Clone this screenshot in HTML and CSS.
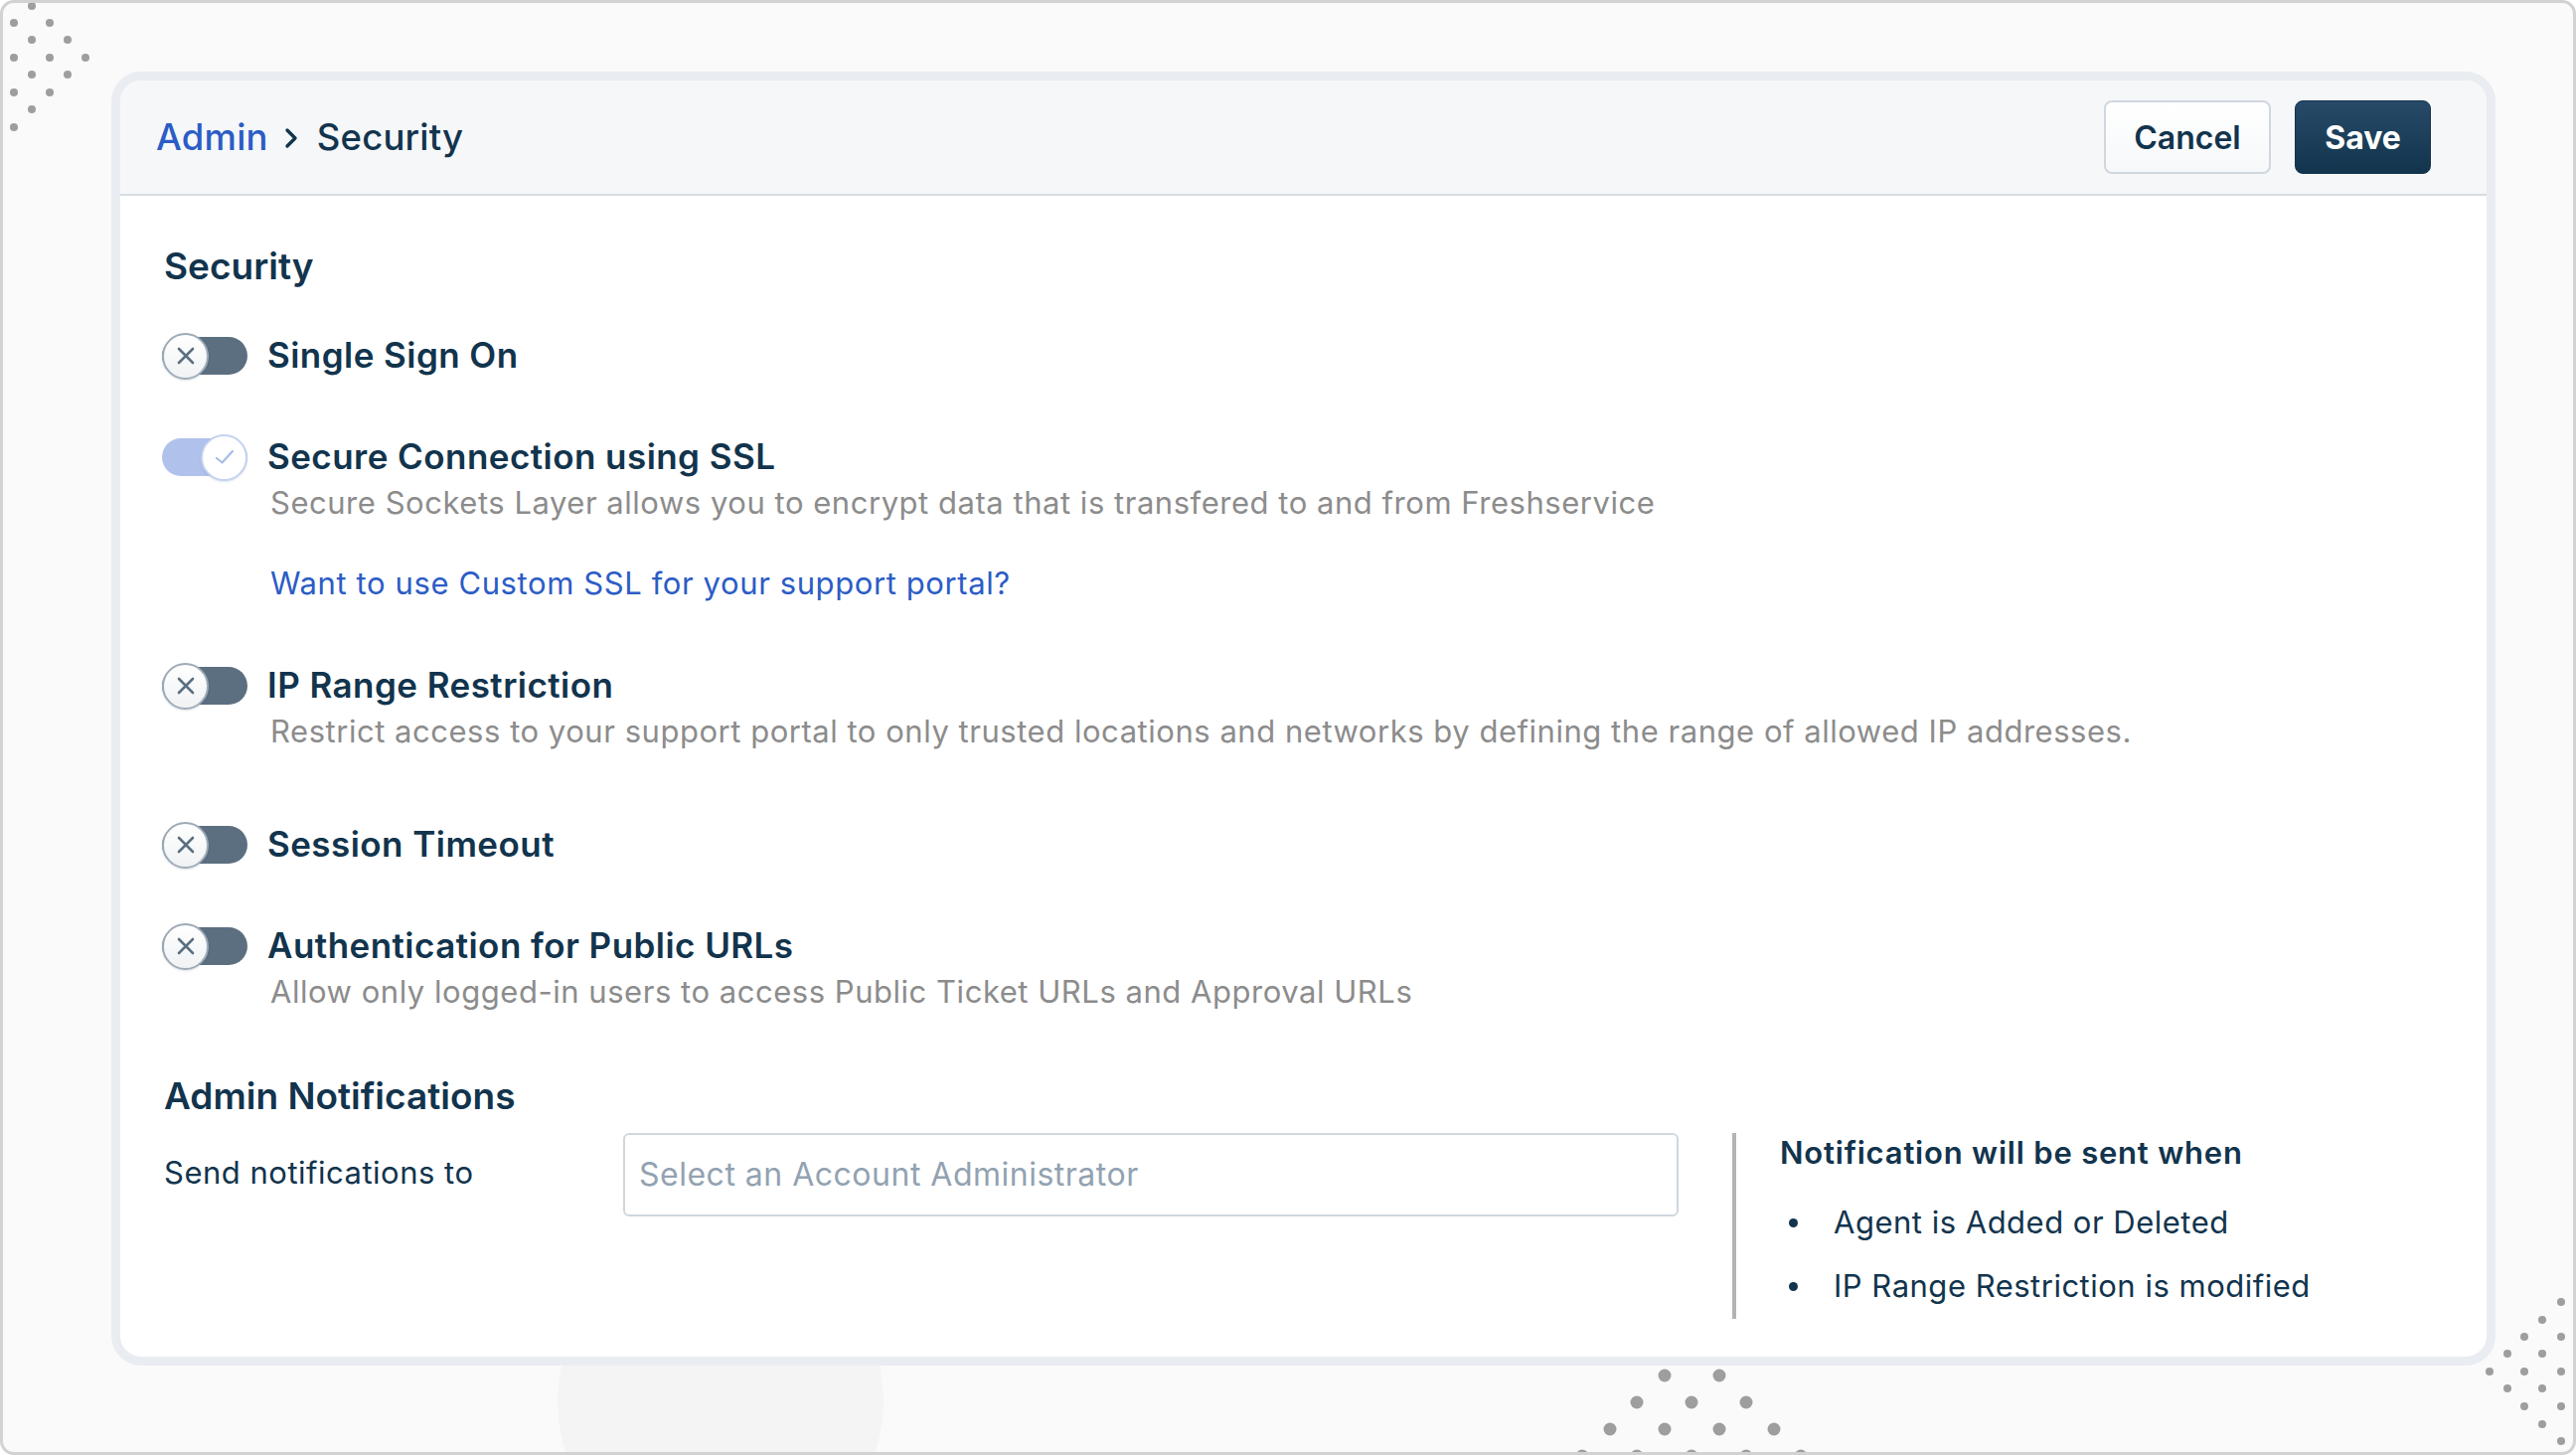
FILE: index.html
```html
<!DOCTYPE html>
<html lang="en">
<head>
<meta charset="utf-8">
<title>Admin - Security</title>
<link rel="stylesheet" href="styles.css">
</head>
<body>
<div class="frame">
  <div class="blob"></div>
  <svg class="dots" width="2592" height="1464" viewBox="0 0 2592 1464" aria-hidden="true">
    <g fill="#9e9e9e">
      <circle cx="32" cy="6" r="4"/>
      <circle cx="14" cy="23" r="4"/><circle cx="50" cy="23" r="4"/>
      <circle cx="32" cy="40" r="4"/><circle cx="68" cy="40" r="4"/>
      <circle cx="14" cy="58" r="4"/><circle cx="50" cy="58" r="4"/><circle cx="86" cy="58" r="4"/>
      <circle cx="32" cy="75" r="4"/><circle cx="68" cy="75" r="4"/>
      <circle cx="14" cy="93" r="4"/><circle cx="50" cy="93" r="4"/>
      <circle cx="32" cy="110" r="4"/>
      <circle cx="14" cy="128" r="4"/>

      <circle cx="2577" cy="1310" r="4"/>
      <circle cx="2558" cy="1328" r="4"/>
      <circle cx="2540" cy="1345" r="4"/><circle cx="2577" cy="1345" r="4"/>
      <circle cx="2523" cy="1362" r="4"/><circle cx="2558" cy="1362" r="4"/>
      <circle cx="2505" cy="1380" r="4"/><circle cx="2540" cy="1380" r="4"/><circle cx="2577" cy="1380" r="4"/>
      <circle cx="2523" cy="1397" r="4"/><circle cx="2558" cy="1397" r="4"/>
      <circle cx="2540" cy="1415" r="4"/><circle cx="2577" cy="1415" r="4"/>
      <circle cx="2558" cy="1433" r="4"/>
      <circle cx="2577" cy="1450" r="4"/>

      <circle cx="1675" cy="1384" r="6.5"/><circle cx="1730" cy="1384" r="6.5"/>
      <circle cx="1647" cy="1411" r="6.5"/><circle cx="1702" cy="1411" r="6.5"/><circle cx="1757" cy="1411" r="6.5"/>
      <circle cx="1620" cy="1438" r="6.5"/><circle cx="1675" cy="1438" r="6.5"/><circle cx="1730" cy="1438" r="6.5"/><circle cx="1785" cy="1438" r="6.5"/>
      <circle cx="1592" cy="1465" r="6.5"/><circle cx="1647" cy="1465" r="6.5"/><circle cx="1702" cy="1465" r="6.5"/><circle cx="1757" cy="1465" r="6.5"/><circle cx="1812" cy="1465" r="6.5"/>
    </g>
  </svg>

  <main class="card">
    <header class="card-head">
      <nav class="crumbs">
        <a class="crumb-link" href="#">Admin</a>
        <svg class="crumb-sep" width="14" height="22" viewBox="0 0 14 22" aria-hidden="true"><path d="M3 3 L11 11 L3 19" fill="none" stroke="#12344d" stroke-width="3.4" stroke-linecap="round" stroke-linejoin="round"/></svg>
        <span class="crumb-current">Security</span>
      </nav>
      <div class="actions">
        <button class="btn btn-secondary">Cancel</button>
        <button class="btn btn-primary">Save</button>
      </div>
    </header>

    <section class="card-body">
      <h2 class="section-title">Security</h2>

      <div class="settings">
        <div class="setting">
          <span class="toggle"><span class="knob"><svg width="22" height="22" viewBox="0 0 22 22"><path d="M4 4 L18 18 M18 4 L4 18" stroke="#5b6f80" stroke-width="2.6" stroke-linecap="round"/></svg></span></span>
          <div class="setting-text">
            <div class="setting-title">Single Sign On</div>
          </div>
        </div>

        <div class="setting">
          <span class="toggle toggle-on"><span class="knob"><svg width="22" height="22" viewBox="0 0 22 22"><path d="M3 12 L8.5 16.5 L19 5" fill="none" stroke="#a9bce6" stroke-width="2.2" stroke-linecap="round" stroke-linejoin="round"/></svg></span></span>
          <div class="setting-text">
            <div class="setting-title">Secure Connection using SSL</div>
            <div class="setting-desc">Secure Sockets Layer allows you to encrypt data that is transfered to and from Freshservice</div>
            <a class="setting-link" href="#">Want to use Custom SSL for your support portal?</a>
          </div>
        </div>

        <div class="setting">
          <span class="toggle"><span class="knob"><svg width="22" height="22" viewBox="0 0 22 22"><path d="M4 4 L18 18 M18 4 L4 18" stroke="#5b6f80" stroke-width="2.6" stroke-linecap="round"/></svg></span></span>
          <div class="setting-text">
            <div class="setting-title">IP Range Restriction</div>
            <div class="setting-desc">Restrict access to your support portal to only trusted locations and networks by defining the range of allowed IP addresses.</div>
          </div>
        </div>

        <div class="setting">
          <span class="toggle"><span class="knob"><svg width="22" height="22" viewBox="0 0 22 22"><path d="M4 4 L18 18 M18 4 L4 18" stroke="#5b6f80" stroke-width="2.6" stroke-linecap="round"/></svg></span></span>
          <div class="setting-text">
            <div class="setting-title">Session Timeout</div>
          </div>
        </div>

        <div class="setting">
          <span class="toggle"><span class="knob"><svg width="22" height="22" viewBox="0 0 22 22"><path d="M4 4 L18 18 M18 4 L4 18" stroke="#5b6f80" stroke-width="2.6" stroke-linecap="round"/></svg></span></span>
          <div class="setting-text">
            <div class="setting-title">Authentication for Public URLs</div>
            <div class="setting-desc">Allow only logged-in users to access Public Ticket URLs and Approval URLs</div>
          </div>
        </div>
      </div>

      <h2 class="section-title section-title-2">Admin Notifications</h2>

      <div class="notify">
        <label class="notify-label">Send notifications to</label>
        <div class="select">Select an Account Administrator</div>
        <div class="divider"></div>
        <div class="notify-info">
          <div class="info-title">Notification will be sent when</div>
          <ul class="info-list">
            <li><span class="dot"></span>Agent is Added or Deleted</li>
            <li><span class="dot"></span>IP Range Restriction is modified</li>
          </ul>
        </div>
      </div>
    </section>
  </main>
</div>
</body>
</html>
```

FILE: styles.css
```css
* { box-sizing: border-box; }

html, body {
  margin: 0;
  padding: 0;
  background: #ffffff;
}

body {
  font-family: "Inter", "Noto Sans", "Liberation Sans", sans-serif;
  color: #12344d;
}

.frame {
  position: relative;
  width: 2592px;
  height: 1464px;
  border: 3px solid #d2d2d2;
  border-radius: 14px;
  background: #fafafa;
  overflow: hidden;
}

.blob {
  position: absolute;
  left: 558px;
  top: 1243px;
  width: 328px;
  height: 328px;
  border-radius: 50%;
  background: #f4f4f4;
}

.dots {
  position: absolute;
  left: -3px;
  top: -3px;
}

.card {
  position: relative;
  z-index: 1;
  margin: 69px 0 0 109px;
  width: 2399px;
  height: 1302px;
  border: 9px solid #e9edf2;
  border-radius: 30px;
  background: #ffffff;
  overflow: hidden;
  display: flex;
  flex-direction: column;
}

/* header */
.card-head {
  height: 116px;
  flex: none;
  background: #f5f7f9;
  border-bottom: 2px solid #d6dde4;
  display: flex;
  align-items: center;
  justify-content: space-between;
  padding: 0 56px 0 36px;
}

.crumbs {
  display: flex;
  align-items: center;
  font-size: 36.5px;
  font-weight: 500;
  letter-spacing: 0.2px;
}

.crumb-link {
  color: #2c5cc5;
  text-decoration: none;
}

.crumb-sep {
  margin: 2px 19px 0 16px;
}

.crumb-current {
  color: #12344d;
}

.actions {
  display: flex;
  gap: 24px;
}

.btn {
  font-family: inherit;
  height: 74px;
  border-radius: 8px;
  font-size: 32px;
  cursor: pointer;
}

.btn-secondary {
  width: 168px;
  background: linear-gradient(#ffffff, #f6f8fa);
  border: 2px solid #cfd7df;
  color: #12344d;
  font-weight: 600;
}

.btn-primary {
  width: 137px;
  background: linear-gradient(#274a68, #12344d);
  border: 1px solid #12344d;
  color: #ffffff;
  font-weight: 700;
}

/* body */
.card-body {
  padding: 48px 44px 0 44px;
}

.section-title {
  margin: 0;
  font-size: 37px;
  line-height: 46px;
  font-weight: 600;
  color: #12344d;
}

.section-title-2 {
  margin-top: 49px;
}

.settings {
  margin-top: 44px;
  display: flex;
  flex-direction: column;
  gap: 58px;
}

.setting {
  display: flex;
  align-items: flex-start;
  gap: 20px;
}

.toggle {
  flex: none;
  width: 86px;
  height: 38px;
  margin-top: 4px;
  margin-left: -2px;
  border-radius: 19px;
  background: #5b6f80;
  display: flex;
  align-items: center;
}

.knob {
  width: 47px;
  height: 47px;
  border-radius: 50%;
  background: linear-gradient(#ffffff, #f0f2f4);
  border: 2px solid #9eabb7;
  box-shadow: 0 1px 2px rgba(18, 52, 77, 0.15);
  display: flex;
  align-items: center;
  justify-content: center;
}

.toggle-on {
  background: #b0c2ec;
  justify-content: flex-end;
}

.toggle-on .knob {
  background: #ffffff;
  border-color: #c5d3f2;
}

.setting-text {
  display: flex;
  flex-direction: column;
}

.setting-title {
  font-size: 35px;
  line-height: 44px;
  font-weight: 600;
  letter-spacing: 0.45px;
  color: #12344d;
}

.setting-desc {
  font-size: 31px;
  line-height: 50px;
  letter-spacing: 0.53px;
  color: #8c8c8c;
  padding-left: 3px;
  margin-bottom: 8px;
}

.setting-link {
  margin-top: 26px;
  font-size: 31px;
  line-height: 44px;
  letter-spacing: 0.6px;
  color: #2c5cc5;
  text-decoration: none;
  padding-left: 3px;
}

/* notifications */
.notify {
  margin-top: 14px;
  display: flex;
  align-items: flex-start;
}

.notify-label {
  width: 462px;
  flex: none;
  font-size: 31px;
  line-height: 80px;
  letter-spacing: 0.5px;
  color: #12344d;
}

.select {
  width: 1062px;
  height: 84px;
  flex: none;
  border: 2px solid #cfd7df;
  border-radius: 6px;
  background: #ffffff;
  padding-left: 14px;
  font-size: 32px;
  line-height: 80px;
  letter-spacing: 0.5px;
  color: #92a2b1;
}

.divider {
  flex: none;
  width: 4px;
  height: 187px;
  margin-left: 54px;
  background: #b4b4b4;
}

.notify-info {
  padding-left: 44px;
}

.info-title {
  margin-top: 0;
  font-size: 31px;
  line-height: 40px;
  font-weight: 600;
  letter-spacing: 0.8px;
  color: #12344d;
}

.info-list {
  list-style: none;
  margin: 28px 0 0 0;
  padding: 0;
  display: flex;
  flex-direction: column;
  gap: 20px;
}

.info-list li {
  display: flex;
  align-items: center;
  font-size: 31px;
  line-height: 44px;
  letter-spacing: 0.5px;
  color: #12344d;
}

.dot {
  width: 9px;
  height: 9px;
  border-radius: 50%;
  background: #12344d;
  margin: 0 36px 0 9px;
}
```
